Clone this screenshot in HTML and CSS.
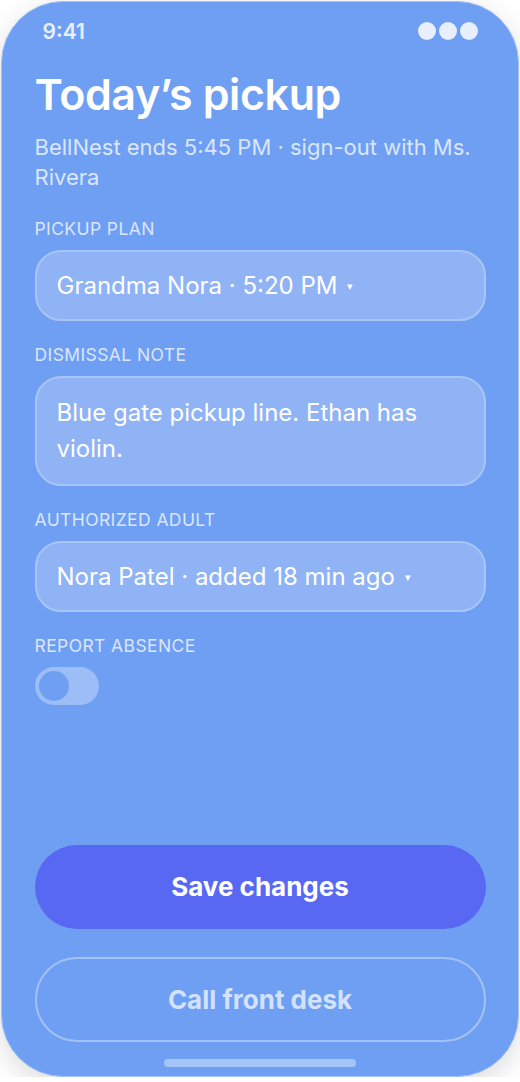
FILE: index.html
```html
<!DOCTYPE html>
<html lang="en">
<head>
    <meta charset="UTF-8">
    <meta name="viewport" content="width=device-width, initial-scale=1.0">
    <title>Today's pickup - BellNest</title>
    <link rel="stylesheet" href="styles.css">
</head>
<body>
    <div class="phone">
        <div class="status-bar">
            <span class="status-time">9:41</span>
            <span class="status-dots">
                <i></i><i></i><i></i>
            </span>
        </div>

        <header class="page-head">
            <h1>Today’s pickup</h1>
            <p class="subtitle">BellNest ends 5:45 PM · sign-out with Ms. Rivera</p>
        </header>

        <div class="form">
            <div class="field">
                <label class="field-label">Pickup plan</label>
                <div class="select">Grandma Nora · 5:20 PM <span class="caret">▾</span></div>
            </div>

            <div class="field">
                <label class="field-label">Dismissal note</label>
                <div class="textarea">Blue gate pickup line. Ethan has violin.</div>
            </div>

            <div class="field">
                <label class="field-label">Authorized adult</label>
                <div class="select">Nora Patel · added 18 min ago <span class="caret">▾</span></div>
            </div>

            <div class="field">
                <label class="field-label">Report absence</label>
                <div class="toggle"><span class="knob"></span></div>
            </div>
        </div>

        <div class="actions">
            <button class="btn btn-primary">Save changes</button>
            <button class="btn btn-outline">Call front desk</button>
        </div>

        <div class="home-indicator"></div>
    </div>
</body>
</html>
```

FILE: styles.css
```css
body {
    font-family: Inter, "Liberation Sans", Arial, sans-serif;
    margin: 0;
    padding: 0;
    background-color: #ffffff;
}
.phone {
    box-sizing: border-box;
    width: 518px;
    height: 1076px;
    margin: 1px 0 0 1px;
    padding: 0 32.5px;
    display: flex;
    flex-direction: column;
    background-color: #6f9ff3;
    border: 1.5px solid #a3c1f6;
    border-radius: 62px;
    box-shadow: 0 8px 28px rgba(0,0,0,0.14);
    color: #ffffff;
    overflow: hidden;
}
.status-bar {
    display: flex;
    justify-content: space-between;
    align-items: center;
    padding: 16.5px 7.5px 0 8px;
    height: 25px;
}
.status-time {
    font-size: 21px;
    line-height: 25px;
    font-weight: 600;
    color: #e8efff;
}
.status-dots {
    display: flex;
    gap: 3px;
}
.status-dots i {
    width: 18px;
    height: 18px;
    border-radius: 50%;
    background-color: #e8efff;
}
.page-head {
    margin-top: 24.5px;
}
h1 {
    font-size: 43px;
    font-weight: 600;
    margin: 0;
    line-height: 52px;
    letter-spacing: -0.4px;
}
.subtitle {
    font-size: 22px;
    line-height: 30px;
    margin: 12px 0 0;
    color: #dbe6fc;
}
.form {
    margin-top: 26px;
    display: flex;
    flex-direction: column;
    gap: 23px;
}
.field-label {
    display: block;
    font-size: 17.5px;
    line-height: 21px;
    letter-spacing: 0.4px;
    text-transform: uppercase;
    color: #dbe6fc;
    margin-bottom: 11px;
}
.select,
.textarea {
    box-sizing: border-box;
    background-color: #8fb3f5;
    border: 2px solid #a9c5f7;
    border-radius: 26px;
    font-size: 24px;
    padding: 0 20px;
}
.select {
    height: 71px;
    display: flex;
    align-items: center;
}
.caret {
    font-size: 11px;
    margin-left: 10px;
}
.textarea {
    line-height: 36px;
    padding-top: 17px;
    padding-bottom: 17px;
}
.toggle {
    box-sizing: border-box;
    width: 64px;
    height: 38px;
    margin-top: 1px;
    padding: 4px;
    border-radius: 19px;
    background-color: #9dbdf7;
}
.knob {
    display: block;
    width: 30px;
    height: 30px;
    border-radius: 50%;
    background-color: #6f9ff3;
}
.actions {
    margin-top: auto;
    display: flex;
    flex-direction: column;
    gap: 28px;
}
.btn {
    box-sizing: border-box;
    width: 100%;
    height: 85px;
    border-radius: 42px;
    font-family: Inter, "Liberation Sans", Arial, sans-serif;
    font-size: 26px;
    font-weight: 700;
    cursor: pointer;
}
.btn-primary {
    height: 84px;
    background-color: #5868f3;
    color: #ffffff;
    border: none;
}
.btn-outline {
    background-color: transparent;
    color: #d3e2fd;
    border: 2px solid #a3c1f6;
}
.home-indicator {
    align-self: center;
    width: 192px;
    height: 8px;
    border-radius: 4px;
    background-color: #a5c4f7;
    margin: 17px 0 9.5px;
}
```
